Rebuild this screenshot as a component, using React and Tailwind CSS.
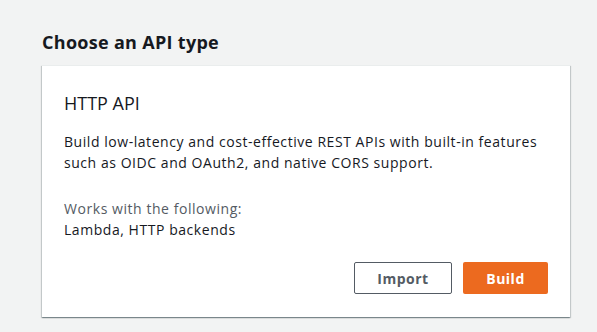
import React from 'react';

const ApiTypeCard = ({ title, description, worksWith }) => (
  <div className="bg-white border-t border-[#eaeded] shadow-[0_1px_1px_0_rgba(0,28,36,0.3),1px_1px_1px_0_rgba(0,28,36,0.15),-1px_1px_1px_0_rgba(0,28,36,0.15)] pl-[22px] pr-[22px] pt-[26px] pb-[23px]">
    <h3 className="text-[18px] leading-[22px] text-[#16191f]">{title}</h3>
    <p className="mt-[17px] text-[14px] leading-[21px] tracking-[0.55px] text-[#16191f]">{description}</p>
    <div className="mt-[25px] text-[14px] leading-[21px] tracking-[0.55px]">
      <div className="text-[#545b64]">Works with the following:</div>
      <div className="text-[#16191f]">{worksWith}</div>
    </div>
    <div className="mt-[22px] flex justify-end gap-[11px]">
      <button className="w-[98px] h-[32px] rounded-[2px] border border-[#545b64] bg-white text-[14px] tracking-[0.5px] font-bold text-[#545b64]">
        Import
      </button>
      <button className="w-[85px] h-[32px] rounded-[2px] bg-[#ec6a1f] text-[14px] tracking-[0.5px] font-bold text-white">
        Build
      </button>
    </div>
  </div>
);

export default function App() {
  return (
    <div className="w-[597px] h-[332px] bg-[#f2f3f3] font-['Open_Sans',sans-serif] overflow-hidden">
      <div className="pl-[42px] pr-[27px] pt-[31px]">
        <h2 className="text-[18px] leading-[22px] font-bold tracking-[0.3px] text-[#16191f]">Choose an API type</h2>
        <div className="mt-[12px]">
          <ApiTypeCard
            title="HTTP API"
            description={
              <>
                Build low-latency and cost-effective REST APIs with built-in features
                <br />
                such as OIDC and OAuth2, and native CORS support.
              </>
            }
            worksWith="Lambda, HTTP backends"
          />
        </div>
      </div>
    </div>
  );
}
